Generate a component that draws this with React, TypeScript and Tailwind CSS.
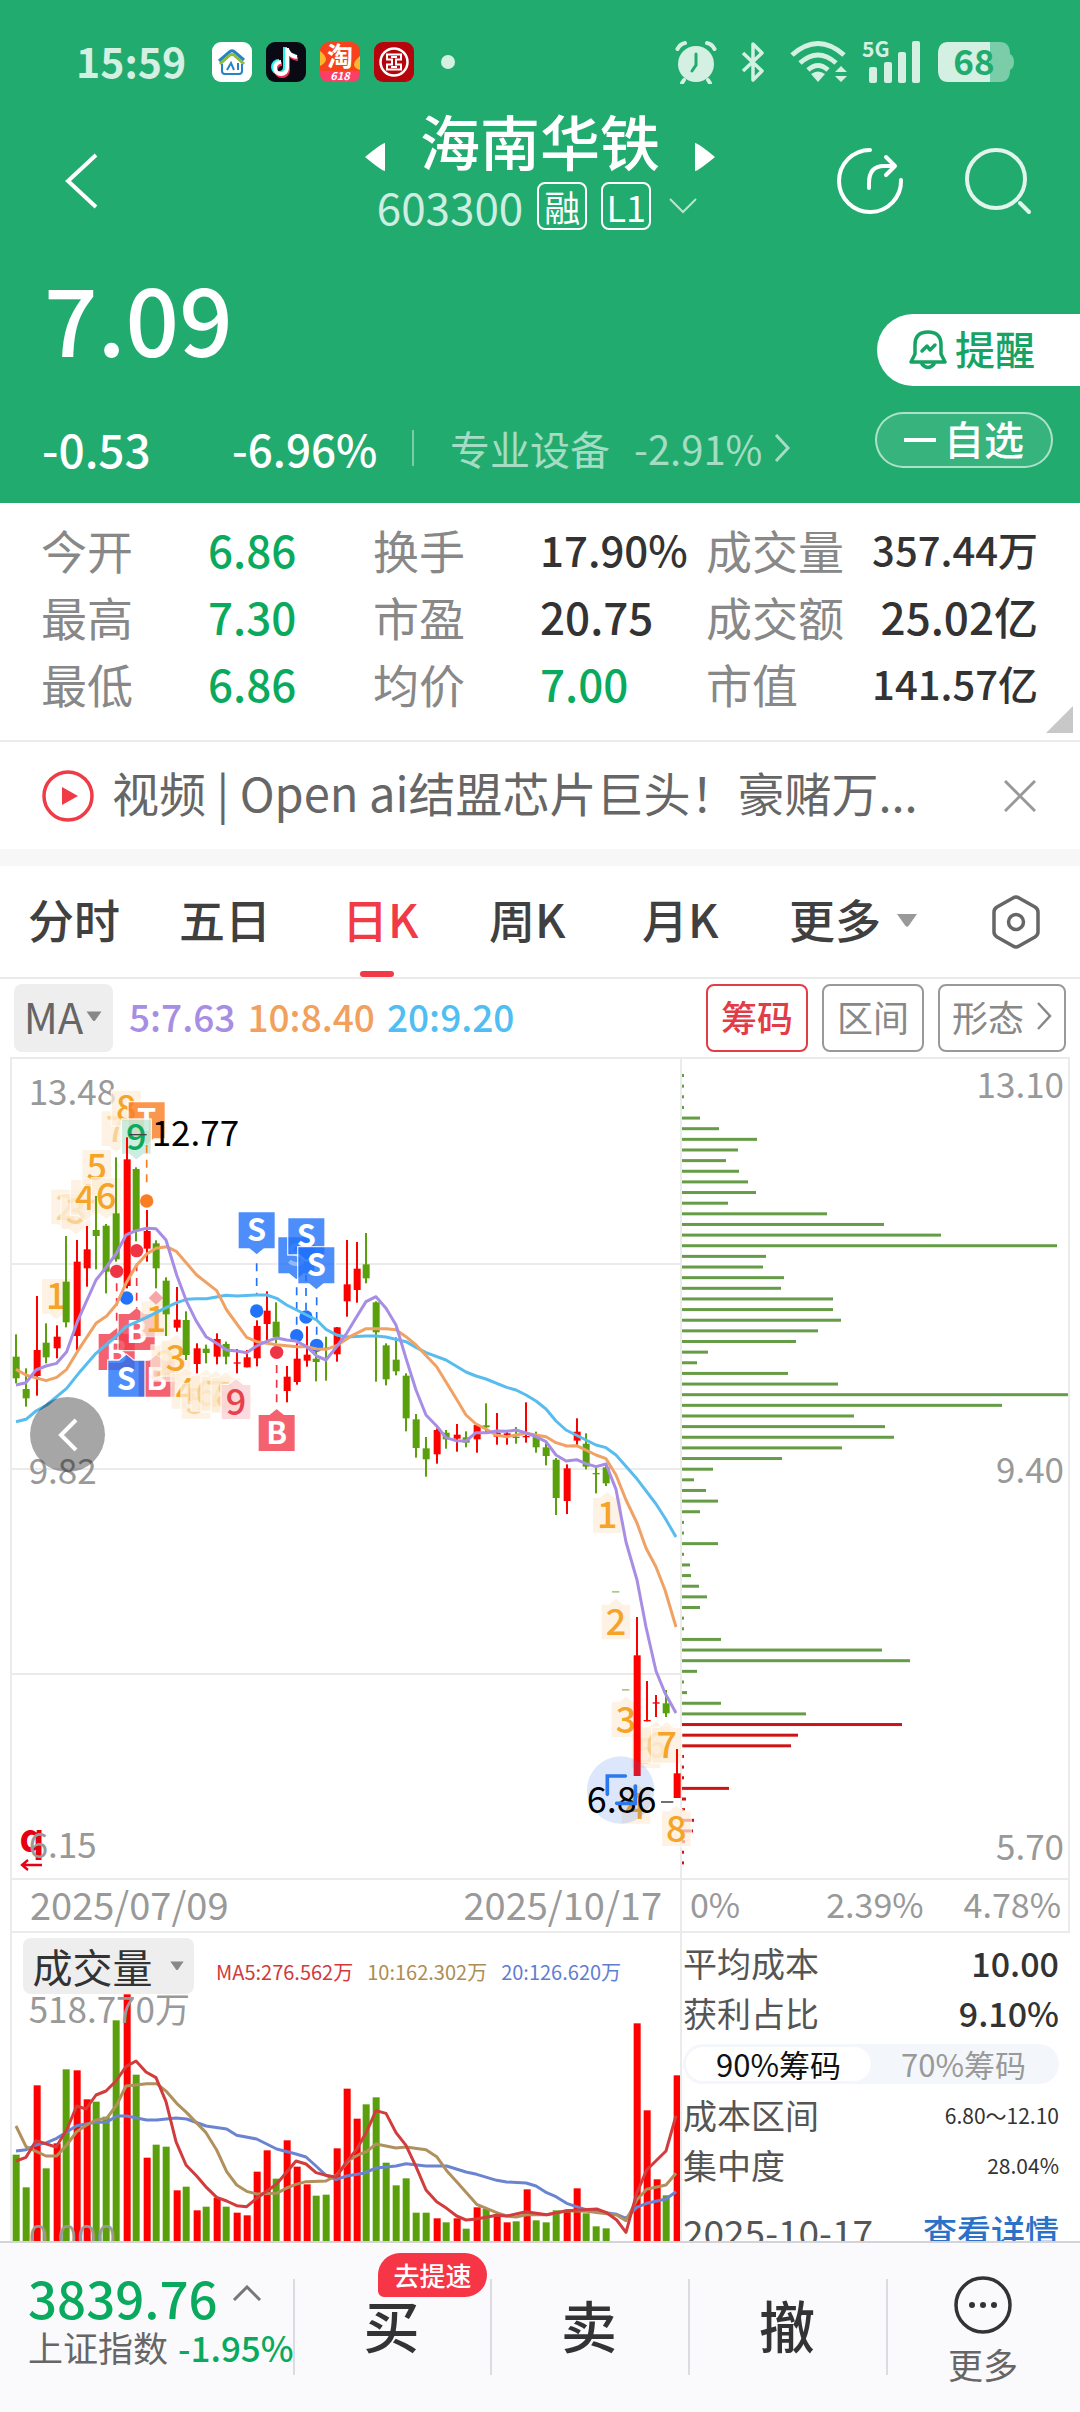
import React from "react";

type Candle = [number, number, number, number, number, "r" | "g"];
type Pt = [number, number];

const RED = "#ff0000";
const GREEN = "#5aa00c";

/* Price chart units: three per pixel. x, high, body top, body bottom, low, colour. */
const candles: Candle[] = [
  [48, 853, 920, 985, 1000, "g"], [78, 955, 1017, 1045, 1070, "g"], [111, 738, 900, 978, 1037, "r"],
  [138, 820, 878, 922, 940, "g"], [171, 826, 860, 895, 925, "r"], [198, 558, 695, 817, 832, "g"],
  [231, 570, 635, 858, 900, "r"], [261, 528, 598, 655, 710, "r"], [288, 438, 540, 558, 658, "g"],
  [318, 522, 527, 665, 730, "g"], [348, 322, 490, 628, 635, "g"], [381, 262, 328, 708, 715, "r"],
  [408, 352, 357, 542, 574, "g"], [441, 480, 543, 596, 635, "r"], [468, 571, 580, 655, 715, "g"],
  [498, 682, 692, 793, 858, "g"], [531, 711, 809, 833, 845, "r"], [558, 784, 810, 915, 930, "g"],
  [591, 880, 895, 942, 970, "r"], [618, 884, 896, 909, 940, "g"], [651, 850, 867, 920, 943, "r"],
  [678, 875, 882, 920, 943, "g"], [711, 897, 937, 941, 970, "r"], [741, 900, 922, 952, 952, "r"],
  [771, 811, 828, 925, 949, "r"], [801, 724, 782, 822, 880, "r"], [828, 757, 815, 862, 880, "g"],
  [861, 948, 980, 1023, 1057, "r"], [891, 880, 926, 996, 1004, "r"], [921, 829, 914, 932, 950, "r"],
  [948, 890, 926, 936, 994, "g"], [978, 860, 893, 897, 992, "g"], [1011, 831, 832, 913, 935, "r"],
  [1041, 570, 703, 754, 800, "r"], [1071, 576, 656, 720, 758, "r"], [1098, 549, 643, 685, 700, "g"],
  [1128, 754, 757, 847, 995, "g"], [1158, 880, 886, 988, 1006, "g"], [1188, 862, 929, 964, 976, "g"],
  [1218, 970, 977, 1105, 1144, "g"], [1248, 1092, 1108, 1194, 1223, "g"], [1278, 1161, 1195, 1228, 1280, "g"],
  [1311, 1135, 1140, 1213, 1241, "r"], [1338, 1140, 1148, 1168, 1196, "g"], [1371, 1122, 1154, 1166, 1205, "r"],
  [1398, 1144, 1162, 1178, 1192, "g"], [1431, 1122, 1125, 1168, 1208, "r"], [1458, 1060, 1126, 1132, 1150, "g"],
  [1491, 1089, 1148, 1160, 1184, "r"], [1521, 1145, 1150, 1158, 1184, "r"], [1548, 1131, 1160, 1164, 1181, "g"],
  [1578, 1057, 1158, 1162, 1178, "r"], [1608, 1145, 1160, 1192, 1208, "g"], [1638, 1180, 1192, 1218, 1246, "g"],
  [1668, 1224, 1229, 1344, 1395, "g"], [1701, 1243, 1255, 1353, 1392, "r"], [1731, 1105, 1145, 1172, 1185, "r"],
  [1758, 1150, 1181, 1250, 1258, "g"], [1788, 1252, 1269, 1273, 1330, "g"], [1818, 1245, 1252, 1300, 1308, "g"],
  [1911, 1701, 1816, 2178, 2178, "r"], [1941, 1893, 2010, 2014, 2014, "r"], [1968, 1935, 1957, 1961, 2001, "r"],
  [1998, 1920, 1960, 1990, 2001, "g"], [2031, 2097, 2170, 2244, 2244, "r"],
];

const ma5: Pt[] = [
  [48, 1005], [78, 998], [108, 960], [138, 948], [170, 940], [200, 905], [232, 815], [288, 690], [320, 650],
  [348, 612], [378, 555], [408, 542], [440, 535], [468, 536], [498, 570], [530, 675], [560, 755], [588, 812],
  [618, 860], [650, 880], [680, 900], [710, 903], [740, 908], [770, 888], [800, 874], [830, 864], [860, 870],
  [888, 873], [920, 890], [950, 918], [978, 930], [1010, 890], [1040, 850], [1070, 800], [1098, 755],
  [1128, 740], [1158, 775], [1188, 825], [1218, 925], [1248, 1020], [1278, 1095], [1310, 1128], [1338, 1163],
  [1368, 1172], [1398, 1173], [1428, 1148], [1460, 1148], [1490, 1143], [1520, 1144], [1548, 1140],
  [1578, 1149], [1608, 1160], [1638, 1175], [1668, 1215], [1698, 1233], [1730, 1229], [1758, 1241],
  [1788, 1250], [1818, 1242], [1848, 1318], [1878, 1476], [1911, 1590], [1938, 1731], [1968, 1863],
  [1995, 1929], [2028, 1989],
];
const ma10: Pt[] = [
  [48, 958], [78, 975], [138, 992], [170, 982], [200, 958], [232, 905], [260, 862], [288, 820], [320, 798],
  [350, 762], [378, 700], [408, 648], [440, 612], [468, 595], [500, 590], [530, 605], [590, 675], [650, 722],
  [680, 780], [740, 862], [770, 875], [830, 884], [890, 890], [920, 890], [950, 897], [978, 898], [1010, 887],
  [1050, 860], [1098, 836], [1158, 836], [1188, 839], [1218, 860], [1248, 885], [1310, 950], [1368, 1045],
  [1398, 1095], [1428, 1122], [1458, 1137], [1488, 1155], [1520, 1160], [1578, 1150], [1608, 1155],
  [1638, 1160], [1668, 1178], [1700, 1188], [1730, 1187], [1788, 1215], [1818, 1226], [1848, 1275],
  [1878, 1350], [1911, 1419], [1938, 1494], [1968, 1551], [1995, 1620], [2028, 1731],
];
const ma20: Pt[] = [
  [48, 1115], [78, 1108], [108, 1083], [140, 1065], [200, 1015], [240, 965], [288, 910], [350, 858],
  [378, 830], [440, 802], [500, 772], [530, 758], [560, 748], [590, 746], [620, 746], [678, 736], [710, 738],
  [770, 735], [800, 735], [830, 745], [860, 765], [920, 795], [950, 810], [978, 838], [1010, 855], [1040, 861],
  [1098, 858], [1128, 858], [1158, 861], [1218, 875], [1248, 892], [1278, 908], [1338, 930], [1398, 966],
  [1428, 978], [1458, 987], [1520, 1012], [1548, 1020], [1578, 1035], [1608, 1053], [1638, 1077],
  [1668, 1113], [1698, 1140], [1758, 1170], [1788, 1185], [1818, 1193], [1848, 1215], [1908, 1283],
  [1968, 1362], [1995, 1404], [2028, 1461],
];

const volumes: [number, number, "r" | "g"][] = [
  [48, 1124, "g"], [78, 1222, "g"], [111, 916, "r"], [138, 1165, "g"], [171, 1090, "r"], [198, 868, "g"],
  [231, 871, "r"], [261, 958, "r"], [288, 965, "g"], [318, 1010, "g"], [348, 721, "g"], [381, 643, "r"],
  [408, 884, "g"], [441, 1133, "r"], [468, 1094, "g"], [498, 1100, "g"], [531, 1231, "r"], [558, 1220, "g"],
  [591, 1291, "r"], [618, 1280, "g"], [651, 1253, "r"], [678, 1280, "g"], [711, 1298, "r"], [741, 1306, "r"],
  [771, 1175, "r"], [801, 1111, "r"], [828, 1196, "g"], [861, 1081, "r"], [891, 1160, "r"], [921, 1213, "r"],
  [948, 1247, "g"], [978, 1244, "g"], [1011, 1105, "r"], [1041, 926, "r"], [1071, 1016, "r"], [1098, 973, "g"],
  [1128, 952, "g"], [1158, 1148, "g"], [1188, 1216, "g"], [1218, 1195, "g"], [1248, 1298, "g"],
  [1278, 1298, "g"], [1311, 1315, "r"], [1338, 1327, "g"], [1371, 1315, "r"], [1398, 1346, "g"],
  [1431, 1282, "r"], [1458, 1287, "g"], [1491, 1303, "r"], [1521, 1327, "r"], [1548, 1324, "g"],
  [1581, 1228, "r"], [1608, 1321, "g"], [1638, 1327, "g"], [1668, 1291, "g"], [1701, 1290, "r"],
  [1731, 1225, "r"], [1758, 1300, "g"], [1788, 1339, "g"], [1818, 1345, "g"], [1911, 730, "r"],
  [1941, 991, "r"], [1971, 1198, "r"], [1998, 1246, "g"], [2031, 886, "r"],
];
const vol5: Pt[] = [
  [48, 1143], [78, 1132], [108, 1082], [168, 1101], [200, 1050], [230, 978], [258, 987], [288, 945],
  [318, 933], [348, 903], [378, 860], [408, 843], [438, 876], [468, 893], [498, 965], [528, 1085], [558, 1155],
  [590, 1188], [620, 1223], [650, 1252], [680, 1263], [710, 1277], [740, 1280], [770, 1255], [800, 1234],
  [830, 1212], [888, 1143], [918, 1152], [948, 1178], [978, 1186], [1008, 1192], [1040, 1145], [1070, 1108],
  [1100, 1055], [1128, 992], [1158, 1000], [1188, 1058], [1218, 1096], [1248, 1160], [1278, 1230],
  [1310, 1265], [1340, 1285], [1370, 1308], [1398, 1320], [1430, 1317], [1490, 1306], [1520, 1308],
  [1578, 1295], [1640, 1304], [1700, 1292], [1790, 1287], [1820, 1298], [1850, 1320], [1878, 1357],
  [1910, 1240], [1940, 1170], [1998, 1113], [2028, 1007],
];
const vol10: Pt[] = [
  [48, 1038], [78, 1100], [138, 1128], [170, 1128], [200, 1095], [230, 1055], [260, 1035], [288, 1020],
  [320, 1015], [350, 975], [378, 918], [440, 911], [470, 911], [500, 935], [530, 970], [560, 998], [618, 1058],
  [650, 1110], [680, 1175], [710, 1215], [740, 1234], [770, 1242], [830, 1240], [860, 1224], [888, 1213],
  [918, 1205], [978, 1203], [1008, 1187], [1050, 1138], [1080, 1122], [1100, 1115], [1128, 1092], [1188, 1104],
  [1218, 1101], [1278, 1109], [1310, 1130], [1340, 1172], [1370, 1205], [1430, 1273], [1490, 1298],
  [1520, 1308], [1548, 1311], [1580, 1304], [1640, 1304], [1700, 1292], [1760, 1294], [1850, 1305],
  [1878, 1322], [1910, 1260], [1940, 1228], [1998, 1215], [2028, 1180],
];
const vol20: Pt[] = [
  [48, 1113], [78, 1109], [108, 1095], [140, 1088], [170, 1075], [230, 1037], [288, 1027], [320, 1027],
  [350, 1008], [380, 1008], [440, 1020], [470, 1020], [528, 1014], [560, 1017], [618, 1038], [680, 1047],
  [710, 1066], [770, 1077], [830, 1107], [888, 1122], [918, 1131], [948, 1158], [978, 1186], [1008, 1199],
  [1040, 1188], [1090, 1180], [1128, 1164], [1188, 1158], [1218, 1151], [1278, 1158], [1340, 1158],
  [1398, 1176], [1430, 1183], [1490, 1201], [1520, 1206], [1578, 1209], [1608, 1218], [1640, 1238],
  [1668, 1250], [1700, 1270], [1760, 1290], [1850, 1303], [1878, 1315], [1910, 1282], [1940, 1270],
  [1998, 1257], [2028, 1235],
];

/* Share of chips held at each price step, from the highest price down. */
const chips = [
  2, 2, 2, 2, 18, 37, 75, 56, 44, 57, 66, 74, 46, 145, 202, 259, 375, 84, 81, 102, 99, 151, 151, 159, 136, 114,
  26, 15, 106, 156, 386, 320, 172, 203, 212, 160, 100, 31, 12, 24, 36, 18, 2, 2, 36, 2, 8, 9, 17, 25, 18, 2, 2,
  39, 200, 228, 15, 2, 5, 39, 124, 220, 116, 109, 2, 2, 2, 47, 4, 3, 12, 11, 3, 2, 2,
];
const FIRST_PROFIT_ROW = 61;

const pts = (p: Pt[]) => p.map((q) => q.join(",")).join(" ");

function Line({ data, color }: { data: Pt[]; color: string }) {
  return <polyline points={pts(data)} fill="none" stroke={color} strokeWidth="9" strokeLinejoin="round" />;
}

const tones = {
  amber: { fill: "#fdeeda", text: "#f5a428", opacity: 0.72, w: 90, h: 108, size: 108, weight: 500 },
  green: { fill: "#c4ebdc", text: "#0aaa5e", opacity: 0.85, w: 90, h: 106, size: 108, weight: 500 },
  pink: { fill: "#fbd5d8", text: "#e8404c", opacity: 0.85, w: 90, h: 106, size: 108, weight: 500 },
  sell: { fill: "#2272fb", text: "#ffffff", opacity: 0.8, w: 112, h: 112, size: 92, weight: 700 },
  buy: { fill: "#f23c4c", text: "#ffffff", opacity: 0.8, w: 112, h: 112, size: 92, weight: 700 },
  trade: { fill: "#fb7d22", text: "#ffffff", opacity: 0.8, w: 112, h: 112, size: 92, weight: 700 },
};

/* A signal flag centred on x, with a small pointer towards its candle. */
function Flag({
  x, y, label, tone, up = false, faint = false,
}: { x: number; y: number; label: string; tone: keyof typeof tones; up?: boolean; faint?: boolean }) {
  const t = tones[tone];
  const l = x - t.w / 2;
  const r = x + t.w / 2;
  const b = y + t.h;
  const d = up
    ? `M${l} ${y}H${x - 22}L${x} ${y - 18}L${x + 22} ${y}H${r}V${b}H${l}Z`
    : `M${l} ${y}H${r}V${b}H${x + 22}L${x} ${b + 18}L${x - 22} ${b}H${l}Z`;
  return (
    <g>
      <path d={d} fill={t.fill} opacity={t.opacity} stroke="#fff" strokeWidth="4" strokeLinejoin="round" />
      <text
        x={x} y={y + t.h / 2 + t.size * 0.36} textAnchor="middle" fill={t.text}
        fontSize={t.size} fontWeight={t.weight} opacity={faint ? 0.4 : 1}
      >
        {label}
      </text>
    </g>
  );
}

function Stem({ x, from, to, dot, color }: { x: number; from: number; to: number; dot: number; color: string }) {
  return (
    <g>
      <line x1={x} x2={x} y1={from} y2={to} stroke={color} strokeWidth="5" strokeDasharray="24 20" />
      <circle cx={x} cy={dot} r="20" fill={color} />
    </g>
  );
}

function PriceChart() {
  return (
    <svg viewBox="36 27 2004 2457" className="block h-auto w-full overflow-visible" role="img" aria-label="日K线图">
      {[642, 1257, 1872].map((y) => (
        <line key={y} x1="36" x2="2040" y1={y} y2={y} stroke="#ebebeb" strokeWidth="6" />
      ))}
      <text x="86" y="164" fill="#999" fontSize="105">13.48</text>
      <Flag x={169} y={685} label="1" tone="amber" />
      <Flag x={197} y={417} label="2" tone="amber" faint />
      <Flag x={228} y={430} label="3" tone="amber" faint />
      <Flag x={256} y={388} label="4" tone="amber" />
      <Flag x={290} y={298} label="5" tone="amber" />
      <Flag x={319} y={383} label="6" tone="amber" />
      <Flag x={348} y={182} label="7" tone="amber" faint />
      <Flag x={379} y={120} label="8" tone="amber" />
      <Flag x={440} y={155} label="T" tone="trade" />
      <Flag x={409} y={207} label="9" tone="green" />
      <Flag x={350} y={850} label="B" tone="buy" up />
      <Flag x={470} y={930} label="B" tone="buy" up />
      <Flag x={410} y={790} label="B" tone="buy" up />
      <Flag x={379} y={930} label="S" tone="sell" up />
      <Flag x={468} y={752} label="1" tone="amber" up />
      <path d="M468 722l22 22-22 20-22-20z" fill="#f7a6a8" />
      <Flag x={498} y={885} label="2" tone="amber" up faint />
      <Flag x={528} y={870} label="3" tone="amber" up />
      <Flag x={558} y={970} label="4" tone="amber" up />
      <Flag x={588} y={1000} label="5" tone="amber" up faint />
      <Flag x={618} y={975} label="6" tone="amber" up faint />
      <Flag x={648} y={978} label="7" tone="amber" up faint />
      <Flag x={678} y={982} label="8" tone="amber" up faint />
      <Flag x={708} y={1003} label="9" tone="pink" up />
      <Flag x={1822} y={1342} label="1" tone="amber" up />
      <Flag x={1848} y={1662} label="2" tone="amber" up />
      <Flag x={1878} y={1955} label="3" tone="amber" up />
      <Flag x={1938} y={2048} label="5" tone="amber" up faint />
      <Flag x={1968} y={2030} label="6" tone="amber" up faint />
      <Flag x={2000} y={2032} label="7" tone="amber" up />
      <Flag x={1908} y={2215} label="4" tone="amber" up />
      <Flag x={2029} y={2282} label="8" tone="amber" up />
      {candles.map(([x, high, top, bottom, low, c]) => {
        const color = c === "r" ? RED : GREEN;
        return (
          <g key={x} fill={color}>
            <rect x={x - 3} y={high} width="6" height={low - high} />
            <rect x={x - 10} y={top} width="21" height={bottom - top} />
          </g>
        );
      })}
      <g fill="#a9ca85">
        <rect x="1836" y="1623" width="22" height="5" />
        <rect x="1866" y="1917" width="22" height="5" />
      </g>
      <Stem x={770} from={640} to={735} dot={783} color="#2272fb" />
      <Stem x={890} from={712} to={835} dot={857} color="#2272fb" />
      <Stem x={918} from={670} to={780} dot={801} color="#2272fb" />
      <Stem x={950} from={742} to={860} dot={886} color="#2272fb" />
      <Stem x={830} from={945} to={1062} dot={907} color="#ee3546" />
      <Stem x={350} from={700} to={830} dot={664} color="#ee3546" />
      <Stem x={410} from={640} to={775} dot={602} color="#ee3546" />
      <Stem x={440} from={285} to={415} dot={453} color="#fb7d22" />
      <circle cx="380" cy="744" r="20" fill="#2272fb" />
      <Flag x={770} y={485} label="S" tone="sell" />
      <Flag x={889} y={560} label="S" tone="sell" faint />
      <Flag x={919} y={503} label="S" tone="sell" />
      <Flag x={949} y={590} label="S" tone="sell" />
      <Flag x={830} y={1093} label="B" tone="buy" up />
      <Line data={ma20} color="#58bdee" />
      <Line data={ma10} color="#f0a264" />
      <Line data={ma5} color="#a78de4" />
      <line x1="387" x2="440" y1="254" y2="254" stroke="#444" strokeWidth="4" />
      <text x="455" y="287" fontSize="105" fill="#000">12.77</text>
      <circle cx="1862" cy="2220" r="101" fill="#3b78ec" opacity="0.18" />
      <text x="1760" y="2288" fontSize="108" fill="#000">6.86</text>
      <path d="M1822 2233V2178H1876M1850 2260H1906V2208" fill="none" stroke="#2c78ee" strokeWidth="11" strokeLinecap="round" />
      <line x1="1983" x2="2020" y1="2256" y2="2256" stroke="#555" strokeWidth="5" />
      <text x="58" y="2406" fontSize="118" fontWeight="700" fill="#e60012">q</text>
      <path d="M126 2445H66M84 2430L66 2445L84 2460" fill="none" stroke="#e60012" strokeWidth="7" />
      <g fill="#999" fontSize="105">
        <text x="86" y="1301">9.82</text>
        <text x="86" y="2423">6.15</text>
      </g>
    </svg>
  );
}

function VolumeChart() {
  return (
    <svg viewBox="36 642 2004 744" className="block h-auto w-full" role="img" aria-label="成交量图">
      {volumes.map(([x, top, c]) => (
        <rect key={x} x={x - 10} y={top} width="21" height={1386 - top} fill={c === "r" ? RED : GREEN} />
      ))}
      <Line data={vol20} color="#6a84d2" />
      <Line data={vol10} color="#b0905c" />
      <Line data={vol5} color="#d23c3c" />
      <g fill="#999" fontSize="105">
        <text x="86" y="730">518.770万</text>
        <text x="86" y="1410">0.000</text>
      </g>
    </svg>
  );
}

function ChipChart() {
  return (
    <svg viewBox="0 9 386 819" className="block h-auto w-full" role="img" aria-label="筹码分布">
      {chips.map((w, i) => (
        <rect key={i} x="0" y={24 + i * 10.64} width={w} height="3" fill={i < FIRST_PROFIT_ROW ? "#669c46" : "#cc1414"} />
      ))}
      <g fill="#999" fontSize="35" textAnchor="end">
        <text x="382" y="48">13.10</text>
        <text x="382" y="433">9.40</text>
        <text x="382" y="810">5.70</text>
      </g>
    </svg>
  );
}

function Caret({ className }: { className: string }) {
  return (
    <svg viewBox="0 0 24 14" className={className} aria-hidden="true">
      <path d="M2 1h20L13.500 13q-1.500 1.500-3 0z" fill="currentColor" />
    </svg>
  );
}

function StatusBar() {
  return (
    <div className="flex h-12 items-center pr-[66px] pl-[76px] text-[#d3f0e2]">
      <span className="w-[136px] pb-1 text-[41px] leading-[44px] font-bold">15:59</span>
      <div className="flex items-center gap-[14px]">
        <svg viewBox="0 0 40 40" className="size-10">
          <rect width="40" height="40" rx="9" fill="#fff" />
          <path d="M7 19L18 9.500Q20 8 22 9.500L32 18" fill="none" stroke="#2583c6" strokeWidth="3" />
          <path d="M8 22L18 13Q20 12 22 13L32 22" fill="none" stroke="#8dbb3c" strokeWidth="3" />
          <path d="M10 22V29Q10 32 13 32H27Q30 32 30 29V22" fill="none" stroke="#2583c6" strokeWidth="2" />
          <path d="M15 28L19 21L22 28M26 21V28" fill="none" stroke="#2583c6" strokeWidth="2" />
        </svg>
        <svg viewBox="0 0 40 40" className="size-10">
          <rect width="40" height="40" rx="9" fill="#0a0a14" />
          <g fill="none" strokeWidth="4">
            <path d="M20 6V26A6 6 0 1 1 14 20M20 7Q22 14 30 15" stroke="#25f4ee" transform="translate(-1 -1)" />
            <path d="M20 6V26A6 6 0 1 1 14 20M20 7Q22 14 30 15" stroke="#fe2c55" transform="translate(2 2)" />
            <path d="M20 6V26A6 6 0 1 1 14 20M20 7Q22 14 30 15" stroke="#fff" transform="translate(1 0)" />
          </g>
        </svg>
        <svg viewBox="0 0 40 40" className="size-10">
          <rect width="40" height="40" rx="9" fill="#f8421c" />
          <path d="M0 9Q12 18 0 24zM40 14Q28 24 40 28z" fill="#ffb52e" />
          <path d="M0 29H40V31Q40 40 31 40H9Q0 40 0 31Z" fill="#fb3f68" />
          <text x="20" y="24" fontSize="26" fontWeight="700" textAnchor="middle" fill="#fff">淘</text>
          <text x="20" y="38" fontSize="11" fontStyle="italic" fontWeight="700" textAnchor="middle" fill="#fff">618</text>
        </svg>
        <svg viewBox="0 0 40 40" className="size-10">
          <rect width="40" height="40" rx="9" fill="#b5040c" />
          <circle cx="20" cy="20" r="13.500" fill="none" stroke="#fff" strokeWidth="2.500" />
          <path d="M13 12.500H27V17.500H22V22.500H27V27.500H13V22.500H18V17.500H13ZM17 15H23M17 25H23" fill="none" stroke="#fff" strokeWidth="2" />
        </svg>
      </div>
      <span className="ml-[27px] size-[14px] rounded-full bg-current" />
      <svg viewBox="0 0 42 44" className="ml-auto h-11 w-[42px]" fill="none" stroke="currentColor" strokeLinecap="round">
        <circle cx="21" cy="24" r="18" fill="currentColor" stroke="none" />
        <path d="M2.500 9Q5 4 10 3M39.500 9Q37 4 32 3" strokeWidth="4" />
        <path d="M9 40L7 43M33 40L35 43" strokeWidth="4" />
        <path d="M21 14V25L17 31" stroke="#21ab6f" strokeWidth="3" />
      </svg>
      <svg viewBox="0 0 24 42" className="ml-6 h-[42px] w-6" fill="none" stroke="currentColor" strokeWidth="3.500" strokeLinejoin="round">
        <path d="M2 12L21 30L12 39V3L21 12L2 30" />
      </svg>
      <svg viewBox="0 0 57 44" className="ml-[25px] h-11 w-[57px]" fill="none" stroke="currentColor" strokeWidth="5">
        <path d="M2 15Q28 -8 54 15M10 23Q28 7 46 23M18 30Q28 21 38 30" />
        <path d="M28 42L21 34Q28 29 35 34Z" fill="currentColor" stroke="none" />
        <path d="M51 26L57 32H45ZM51 42L57 36H45Z" fill="currentColor" stroke="none" />
      </svg>
      <svg viewBox="0 0 58 44" className="ml-4 h-11 w-[58px] overflow-visible" fill="currentColor">
        <text x="-1" y="17" fontSize="21" fontWeight="700">5G</text>
        <rect x="6" y="27" width="8" height="16" rx="2" />
        <rect x="21" y="22" width="8" height="21" rx="2" />
        <rect x="35" y="12" width="8" height="31" rx="2" />
        <rect x="49" y="1" width="8" height="42" rx="2" />
      </svg>
      <svg viewBox="0 0 76 40" className="ml-[17px] h-10 w-[76px] overflow-visible" fill="currentColor">
        <path d="M52 0H62Q72 0 72 12Q76 14 76 20Q76 26 72 28Q72 40 62 40H52Z" opacity="0.5" />
        <path d="M10 0H52V40H10Q0 40 0 28V12Q0 0 10 0Z" />
        <text x="36" y="33" fontSize="35" fontWeight="700" textAnchor="middle" fill="#21ab6f">68</text>
      </svg>
    </div>
  );
}

function Header() {
  return (
    <header className="bg-[#21ab6f] pt-[38px] pb-[27px] text-white">
      <StatusBar />
      <div className="mt-[22px] grid grid-cols-[1fr_auto_1fr] items-center">
        <button aria-label="返回" className="ml-16 w-fit pt-6">
          <svg viewBox="0 0 34 56" className="h-14 w-[34px]" fill="none" stroke="currentColor" strokeWidth="4">
            <path d="M32 2L4 28L32 54" />
          </svg>
        </button>
        <div className="flex flex-col items-center gap-[10px]">
          <div className="flex items-center gap-[34px]">
            <button aria-label="上一只" className="pt-[34px]">
              <svg viewBox="0 0 22 30" className="h-[30px] w-[22px]"><path d="M21 1V29Q18 29 1 15Q18 1 21 1Z" fill="currentColor" /></svg>
            </button>
            <h1 className="text-[60px] leading-[64px] font-medium">海南华铁</h1>
            <button aria-label="下一只" className="pt-[34px]">
              <svg viewBox="0 0 22 30" className="h-[30px] w-[22px]"><path d="M1 1V29Q4 29 21 15Q4 1 1 1Z" fill="currentColor" /></svg>
            </button>
          </div>
          <div className="flex h-12 items-center gap-[14px] pr-[6px]">
            <span className="text-[44px] leading-[48px] text-[#cdeee0]">603300</span>
            <span className="flex h-12 w-[50px] items-center justify-center rounded-lg border-2 border-white text-[36px] leading-[40px]">融</span>
            <span className="flex h-12 w-[50px] items-center justify-center rounded-lg border-2 border-white text-[36px] leading-[40px]">L1</span>
            <button aria-label="展开" className="ml-1 text-[#b9e5d1]">
              <svg viewBox="0 0 28 16" className="h-4 w-7" fill="none" stroke="currentColor" strokeWidth="2"><path d="M1 1L14 14L27 1" /></svg>
            </button>
          </div>
        </div>
        <div className="flex items-center justify-end gap-[60px] pt-6 pr-12">
          <button aria-label="分享">
            <svg viewBox="0 0 68 68" className="size-[68px]" fill="none" stroke="currentColor" strokeWidth="4" strokeLinecap="round" strokeLinejoin="round">
              <path d="M34 3A31 31 0 1 0 65 33" />
              <path d="M33 41V36Q33 19 48 19H57M50 10L59 19L50 28" />
            </svg>
          </button>
          <button aria-label="搜索" className="text-[#e2f5ec]">
            <svg viewBox="0 0 68 68" className="size-[68px]" fill="none" stroke="currentColor" strokeWidth="4" strokeLinecap="round">
              <circle cx="32" cy="32" r="29" />
              <path d="M56 56L65 65" />
            </svg>
          </button>
        </div>
      </div>
      <div className="mt-[46px] flex h-[112px] items-start justify-between">
        <p className="pl-[44px] text-[94px] leading-[80px] font-medium">7.09</p>
        <button className="mt-[38px] flex h-[72px] w-[203px] items-center gap-2 rounded-l-full bg-white pl-8 text-[#16a364]">
          <svg viewBox="0 0 38 40" className="h-10 w-[38px]" fill="none" stroke="currentColor" strokeWidth="3.500" strokeLinejoin="round" strokeLinecap="round">
            <path d="M6 24V15Q6 2 19 2Q32 2 32 15V24L36 32H2L6 24Z" />
            <path d="M13 34Q19 41 25 34M13 21L18 16L21 20L26 15" />
          </svg>
          <span className="pb-1 text-[40px] leading-[48px] font-medium">提醒</span>
        </button>
      </div>
      <div className="mt-[22px] flex h-[66px] items-start pr-[27px] pl-[42px]">
        <div className="flex items-center pt-[10px]">
          <span className="w-[190px] text-[46px] leading-[56px] font-medium">-0.53</span>
          <span className="w-[180px] text-[44px] leading-[56px] font-medium">-6.96%</span>
          <span className="h-9 w-[2px] bg-white/40" />
          <a href="#sector" className="ml-9 flex items-center gap-6 text-[40px] leading-[56px] text-white/60">
            <span>专业设备</span>
            <span className="flex items-center gap-3">
              -2.91%
              <svg viewBox="0 0 16 28" className="h-7 w-4" fill="none" stroke="currentColor" strokeWidth="3"><path d="M2 1L14 14L2 27" /></svg>
            </span>
          </a>
        </div>
        <button className="mt-[2px] ml-auto flex h-14 w-[178px] items-center justify-center gap-2 rounded-full border-2 border-white/60 bg-white/10">
          <span className="h-1 w-8 bg-white" />
          <span className="pb-1 text-[40px] leading-[48px] font-medium">自选</span>
        </button>
      </div>
    </header>
  );
}

const UP = "text-[#0aaa5e]";
const INK = "text-[#333]";
const stats = [
  [["今开", "6.86", UP], ["换手", "17.90%", INK], ["成交量", "357.44万", INK]],
  [["最高", "7.30", UP], ["市盈", "20.75", INK], ["成交额", "25.02亿", INK]],
  [["最低", "6.86", UP], ["均价", "7.00", UP], ["市值", "141.57亿", INK]],
];

const valueSize = (v: string) => {
  if (v.length > 6) return "text-[40px]";
  return v.endsWith("%") ? "text-[42px]" : "text-[44px]";
};

function Stats() {
  return (
    <section className="relative border-b-2 border-[#ebebeb] pt-3 pr-[42px] pb-6 pl-[41px]">
      <table className="w-full table-fixed text-left whitespace-nowrap">
        <colgroup>
          <col className="w-[167px]" /><col className="w-[165px]" /><col className="w-[167px]" />
          <col className="w-[166px]" /><col className="w-[150px]" /><col />
        </colgroup>
        <tbody>
          {stats.map((row) => (
            <tr key={row[0][0]} className="h-[67px]">
              {row.map(([k, v, c], i) => (
                <React.Fragment key={k}>
                  <th scope="row" className="p-0 text-[46px] leading-[60px] font-normal text-[#888]">{k}</th>
                  <td className={`p-0 leading-[60px] font-medium ${c} ${i === 2 ? "text-right" : ""} ${valueSize(v)}`}>{v}</td>
                </React.Fragment>
              ))}
            </tr>
          ))}
        </tbody>
      </table>
      <svg viewBox="0 0 27 27" className="absolute right-[7px] bottom-[7px] size-[27px]" aria-hidden="true"><path d="M27 0V27H0Z" fill="#c8c8c8" /></svg>
    </section>
  );
}

function News() {
  return (
    <section className="flex h-[107px] items-center pr-11 pl-[42px]">
      <svg viewBox="0 0 52 52" className="size-[52px] shrink-0" aria-hidden="true">
        <circle cx="26" cy="26" r="24" fill="none" stroke="#f03b47" strokeWidth="3.500" />
        <path d="M20 17V35L36 26Z" fill="#f03b47" />
      </svg>
      <a href="#news" className="ml-[18px] pb-2 text-[47px] leading-[60px] whitespace-nowrap text-[#666]">视频 | Open ai结盟芯片巨头！豪赌万...</a>
      <button aria-label="关闭" className="ml-auto text-[#999]">
        <svg viewBox="0 0 32 32" className="size-8" fill="none" stroke="currentColor" strokeWidth="3"><path d="M1 1L31 31M31 1L1 31" /></svg>
      </button>
    </section>
  );
}

function Tabs() {
  const tab = "relative h-full pb-2 text-[#404040]";
  return (
    <nav className="flex h-[113px] items-center border-b-2 border-[#ebebeb] pr-10 pl-7 text-[46px] leading-[60px] font-medium">
      <button className={`${tab} w-[151px] text-left`}>分时</button>
      <button className={`${tab} w-[163px] text-left`}>五日</button>
      <button aria-current="page" className="relative h-full w-[147px] pb-2 text-left text-[#f03b47]">
        日K
        <span className="absolute bottom-0 left-[18px] h-[6px] w-[34px] rounded-full bg-[#f03b47]" />
      </button>
      <button className={`${tab} w-[153px] text-left`}>周K</button>
      <button className={`${tab} w-[147px] text-left`}>月K</button>
      <button className={`${tab} flex items-center gap-[14px]`}>
        更多
        <Caret className="mt-1 h-[14px] w-6 text-[#999]" />
      </button>
      <button aria-label="设置" className="ml-auto text-[#666]">
        <svg viewBox="0 0 48 54" className="h-[54px] w-12" fill="none" stroke="currentColor" strokeWidth="3.500" strokeLinejoin="round">
          <path d="M21 3Q24 1 27 3L43 12Q46 14 46 17V37Q46 40 43 42L27 51Q24 53 21 51L5 42Q2 40 2 37V17Q2 14 5 12Z" />
          <circle cx="24" cy="27" r="7.500" />
        </svg>
      </button>
    </nav>
  );
}

function Indicators() {
  const pill = "flex h-[68px] items-center justify-center rounded-lg border-2 pb-1 text-[36px] leading-[48px]";
  return (
    <div className="flex h-[78px] items-center px-[14px]">
      <button className="flex h-[68px] w-[99px] items-center justify-center gap-[2px] rounded-lg bg-[#eee] pb-1 text-[42px] leading-[48px] text-[#666]">
        MA
        <Caret className="h-[12px] w-[18px] text-[#888]" />
      </button>
      <div className="ml-4 flex gap-3 pb-1 text-[37px] leading-[48px] font-medium">
        <span className="text-[#a78de4]">5:7.63</span>
        <span className="text-[#f2a05e]">10:8.40</span>
        <span className="text-[#50bdf3]">20:9.20</span>
      </div>
      <div className="ml-auto flex gap-[14px]">
        <button className={`${pill} w-[102px] border-[#e23c48] font-medium text-[#e23c48]`}>筹码</button>
        <button className={`${pill} w-[102px] border-[#999] text-[#888]`}>区间</button>
        <button className={`${pill} w-[128px] gap-3 border-[#999] text-[#888]`}>
          形态
          <svg viewBox="0 0 16 28" className="h-7 w-4" fill="none" stroke="currentColor" strokeWidth="2.500"><path d="M2 1L14 14L2 27" /></svg>
        </button>
      </div>
    </div>
  );
}

const axis = "flex h-[55px] items-center border-y-2 border-[#ebebeb] pb-1 text-[#999]";

function Charts() {
  const row = "flex h-[50px] items-center justify-between text-[34px] leading-[48px]";
  return (
    <div className="mr-[10px] ml-[10px] grid flex-1 grid-cols-[672fr_388fr] overflow-hidden border-t-2 border-[#ebebeb]">
      <div className="border-x-2 border-[#ebebeb]">
        <div className="relative">
          <PriceChart />
          <button aria-label="向左" className="absolute top-[338px] left-[18px] flex size-[75px] items-center justify-center rounded-full bg-black/35 text-white">
            <svg viewBox="0 0 20 34" className="h-[34px] w-5" fill="none" stroke="currentColor" strokeWidth="4"><path d="M18 2L3 17L18 32" /></svg>
          </button>
        </div>
        <div className={`${axis} justify-between px-[18px] text-[38px] leading-[48px]`}>
          <span>2025/07/09</span>
          <span>2025/10/17</span>
        </div>
        <div className="flex h-[61px] items-center pt-1 pl-[11px]">
          <button className="flex h-[56px] w-[171px] items-center justify-center gap-4 rounded-lg bg-[#eee] text-[40px] leading-[48px] text-[#333]">
            成交量
            <Caret className="h-[11px] w-4 text-[#888]" />
          </button>
          <div className="ml-[22px] flex gap-[14px] pt-3 text-[20px] leading-6">
            <span className="text-[#d03a3a]">MA5:276.562万</span>
            <span className="text-[#ae8c55]">10:162.302万</span>
            <span className="text-[#5f7dd2]">20:126.620万</span>
          </div>
        </div>
        <VolumeChart />
      </div>
      <div>
        <div className="border-r-2 border-[#ebebeb]"><ChipChart /></div>
        <div className={`${axis} border-r-2 pr-[7px] pl-2 text-[34px] leading-[48px]`}>
          <span className="flex-1">0%</span>
          <span className="mr-10">2.39%</span>
          <span>4.78%</span>
        </div>
        <div className="pt-[5px] pr-[11px] pl-px text-[#555]">
          <div className={row}><span>平均成本</span><span className="font-medium text-[#333]">10.00</span></div>
          <div className={row}><span>获利占比</span><span className="font-medium text-[#333]">9.10%</span></div>
          <div className="my-[6px] flex h-10 rounded-full bg-[#f3f7fb] p-[3px] text-[31px] leading-[34px]">
            <button aria-pressed="true" className="flex-1 rounded-full bg-white text-[#111]">90%筹码</button>
            <button aria-pressed="false" className="flex-1 text-[#999]">70%筹码</button>
          </div>
          <div className={row}><span>成本区间</span><span className="text-[21px] text-[#333]">6.80～12.10</span></div>
          <div className={row}><span>集中度</span><span className="text-[21px] text-[#333]">28.04%</span></div>
          <div className="mt-4 flex h-[50px] items-center justify-between text-[37px] leading-[48px]">
            <span>2025-10-17</span>
            <a href="#detail" className="text-[34px] font-medium text-[#2a72c8]">查看详情</a>
          </div>
        </div>
      </div>
    </div>
  );
}

function BottomBar() {
  const trade = "relative flex items-center justify-center pb-2 text-[56px] leading-[64px] font-medium text-[#333]";
  const rule = "before:absolute before:left-0 before:top-9 before:h-24 before:w-[2px] before:bg-[#dcdce0]";
  return (
    <footer className="grid h-[171px] shrink-0 grid-cols-[minmax(0,293fr)_197fr_198fr_198fr_194fr] border-t-2 border-[#d4d4d8] bg-[#fafafd]">
      <button className="flex flex-col items-start pt-[22px] pl-7 whitespace-nowrap">
        <span className="flex items-center gap-[14px] text-[51px] leading-[64px] font-medium text-[#0aaa5e]">
          3839.76
          <svg viewBox="0 0 30 16" className="mb-2 h-4 w-[30px] text-[#777]" fill="none" stroke="currentColor" strokeWidth="3"><path d="M2 15L15 2L28 15" /></svg>
        </span>
        <span className="flex gap-[10px] text-[35px] leading-[36px] text-[#666]">
          上证指数 <span className="font-medium text-[#0aaa5e]">-1.95%</span>
        </span>
      </button>
      <button className={`${trade} ${rule}`}>
        买
        <span className="absolute top-[10px] left-[85px] flex h-11 w-[109px] items-center justify-center rounded-[22px] rounded-bl-md bg-[#f63546] text-[26px] leading-8 text-white">去提速</span>
      </button>
      <button className={`${trade} ${rule}`}>卖</button>
      <button className={`${trade} ${rule}`}>撤</button>
      <button className={`relative flex flex-col items-center gap-[10px] pt-[33px] text-[35px] leading-[40px] text-[#666] ${rule}`}>
        <svg viewBox="0 0 58 58" className="size-[58px] text-[#333]" aria-hidden="true">
          <circle cx="29" cy="29" r="27" fill="none" stroke="currentColor" strokeWidth="3.500" />
          <g fill="currentColor"><circle cx="18" cy="29" r="3" /><circle cx="29" cy="29" r="3" /><circle cx="40" cy="29" r="3" /></g>
        </svg>
        更多
      </button>
    </footer>
  );
}

export default function App() {
  return (
    <div className="flex h-screen flex-col overflow-hidden bg-white font-['Noto_Sans_CJK_SC',sans-serif]">
      <Header />
      <main className="flex min-h-0 flex-1 flex-col overflow-hidden">
        <Stats />
        <News />
        <div className="h-[17px] shrink-0 bg-[#f7f7f7]" />
        <Tabs />
        <Indicators />
        <Charts />
      </main>
      <BottomBar />
    </div>
  );
}
